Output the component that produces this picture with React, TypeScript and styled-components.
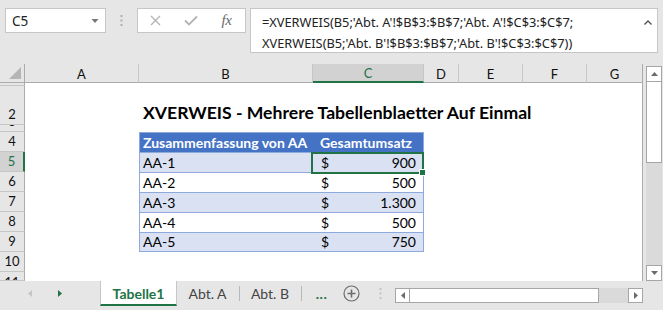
import React from "react";
import styled, { createGlobalStyle } from "styled-components";

const GREEN = "#217346";
const TABLE_LINE = "#8ea9db";

const GlobalStyle = createGlobalStyle`
  html, body {
    margin: 0;
    padding: 0;
    background: #e6e6e6;
  }
  * {
    box-sizing: border-box;
  }
`;

const Window = styled.div`
  width: 663px;
  height: 310px;
  overflow: hidden;
  background: #e6e6e6;
  display: flex;
  flex-direction: column;
  font-family: "Lato", "Open Sans", sans-serif;
`;

/* ---------- formula bar ---------- */

const FormulaRow = styled.div`
  height: 64px;
  flex: none;
  display: flex;
  align-items: flex-start;
  padding: 8px 0 0 5px;
`;

const NameBox = styled.div`
  width: 101px;
  height: 25px;
  background: #fff;
  border: 1px solid #c6c6c6;
  display: flex;
  align-items: center;
  justify-content: space-between;
  padding: 0 6px 0 6px;
  font-family: "Noto Sans", sans-serif;
  font-size: 13.5px;
  color: #222;
`;

const Grip = styled.div`
  width: 31px;
  height: 25px;
  display: flex;
  align-items: center;
  justify-content: center;
`;

const FxBox = styled.div`
  width: 109px;
  height: 25px;
  background: #fff;
  border: 1px solid #c6c6c6;
  display: flex;
  align-items: center;
  justify-content: space-around;
  padding: 0 2px 0 0;
`;

const FxLabel = styled.span`
  font-family: "Liberation Serif", serif;
  font-style: italic;
  font-size: 15px;
  color: #6b6b6b;
  letter-spacing: -0.5px;
`;

const FormulaBox = styled.div`
  margin-left: 4px;
  width: 408px;
  height: 45px;
  background: #fff;
  border: 1px solid #c6c6c6;
  display: flex;
  align-items: flex-start;
  justify-content: space-between;
  padding: 3px 4px 0 11px;
`;

const FormulaText = styled.div`
  font-family: "Noto Sans", sans-serif;
  font-size: 12.8px;
  line-height: 21px;
  color: #222;
  white-space: nowrap;
`;

/* ---------- sheet ---------- */

const SheetArea = styled.div`
  height: 217px;
  flex: none;
  display: flex;
`;

const Sheet = styled.div`
  width: 643px;
  display: grid;
  grid-template-columns: 25px 114px 174px 111px 35px 64px 64px 56px;
  grid-template-rows: 19px 3px 39px 7px repeat(7, 20px) 9px;
  background: #fff;
  border-right: 1px solid #ababab;
  overflow: hidden;
`;

const Corner = styled.div`
  grid-row: 1;
  grid-column: 1;
  background: #e6e6e6;
  border-right: 1px solid #ababab;
  border-bottom: 1px solid #ababab;
  display: flex;
  align-items: flex-end;
  justify-content: flex-end;
  padding: 0 3px 3px 0;
`;

const ColHeader = styled.div<{ $active?: boolean }>`
  grid-row: 1;
  background: ${(p) => (p.$active ? "#d2d2d2" : "#e6e6e6")};
  color: ${(p) => (p.$active ? GREEN : "#111")};
  border-right: 1px solid #c6c6c6;
  border-bottom: ${(p) => (p.$active ? `2px solid ${GREEN}` : "1px solid #ababab")};
  font-size: 13px;
  display: flex;
  align-items: center;
  justify-content: center;
  padding-top: 1px;
`;

const RowHeader = styled.div<{ $active?: boolean }>`
  grid-column: 1;
  background: ${(p) => (p.$active ? "#d2d2d2" : "#e6e6e6")};
  color: ${(p) => (p.$active ? GREEN : "#111")};
  border-right: ${(p) => (p.$active ? `2px solid ${GREEN}` : "1px solid #ababab")};
  border-bottom: 1px solid #c6c6c6;
  font-size: 13px;
  line-height: 16px;
  display: flex;
  align-items: flex-end;
  justify-content: center;
  padding-bottom: 2px;
  overflow: hidden;
`;

const RowHeaderTop = styled(RowHeader)`
  align-items: flex-start;
  padding: 2px 0 0;
`;

const Title = styled.div`
  grid-row: 3;
  grid-column: 3 / span 6;
  align-self: end;
  padding: 0 0 2px 4px;
  font-weight: 700;
  font-size: 17.6px;
  color: #000;
  white-space: nowrap;
`;

type Variant = "head" | "band" | "plain";

const Cell = styled.div<{ $variant: Variant; $col: "B" | "C"; $last?: boolean; $selected?: boolean }>`
  position: relative;
  grid-column: ${(p) => (p.$col === "B" ? 3 : 4)};
  background: ${(p) =>
    p.$variant === "head" ? "#4472c4" : p.$variant === "band" ? "#d9e1f2" : "#fff"};
  color: ${(p) => (p.$variant === "head" ? "#fff" : "#000")};
  font-weight: ${(p) => (p.$variant === "head" ? 700 : 400)};
  font-size: 14px;
  border-top: 1px solid ${TABLE_LINE};
  border-left: ${(p) => (p.$col === "B" ? `1px solid ${TABLE_LINE}` : "none")};
  border-right: ${(p) => (p.$col === "C" ? `1px solid ${TABLE_LINE}` : "none")};
  border-bottom: ${(p) => (p.$last ? `1px solid ${TABLE_LINE}` : "none")};
  display: flex;
  align-items: flex-end;
  justify-content: ${(p) =>
    p.$variant === "head" && p.$col === "C"
      ? "center"
      : p.$col === "C"
      ? "space-between"
      : "flex-start"};
  padding: 0 7px 1px ${(p) => (p.$col === "C" && p.$variant !== "head" ? "8px" : "3px")};
  line-height: 17px;
  white-space: nowrap;

  ${(p) =>
    p.$selected &&
    `
    &::before {
      content: "";
      position: absolute;
      left: -2px;
      top: -1px;
      right: -1px;
      bottom: -2px;
      border: 2px solid ${GREEN};
      z-index: 2;
    }
    &::after {
      content: "";
      position: absolute;
      right: -3px;
      bottom: -4px;
      width: 5px;
      height: 5px;
      background: ${GREEN};
      border: 1px solid #fff;
      z-index: 3;
    }
  `}
`;

/* ---------- vertical scrollbar ---------- */

const VScroll = styled.div`
  margin-left: 3px;
  width: 16px;
  padding-top: 2px;
  display: flex;
  flex-direction: column;
  background: #e6e6e6;
`;

const ScrollButton = styled.div`
  flex: none;
  width: 16px;
  height: 16px;
  background: #fff;
  border: 1px solid #a6a6a6;
  display: flex;
  align-items: center;
  justify-content: center;
`;

const VTrack = styled.div`
  flex: 1;
  background: #dadada;
  display: flex;
  flex-direction: column;
`;

const VThumb = styled.div`
  height: 81px;
  background: #fff;
  border: 1px solid #a6a6a6;
  border-top: none;
`;

/* ---------- tabs ---------- */

const TabBar = styled.div`
  flex: 1;
  display: flex;
  align-items: flex-start;
`;

const TabNav = styled.div`
  width: 100px;
  height: 25px;
  display: flex;
  align-items: center;
  padding-left: 27px;
  gap: 24px;
`;

const Tab = styled.div<{ $active?: boolean; $w: number }>`
  width: ${(p) => p.$w}px;
  height: 25px;
  display: flex;
  align-items: center;
  justify-content: center;
  font-size: 14px;
  background: ${(p) => (p.$active ? "#fff" : "transparent")};
  color: ${(p) => (p.$active ? GREEN : "#444")};
  font-weight: ${(p) => (p.$active ? 700 : 400)};
  border-bottom: ${(p) => (p.$active ? `2px solid ${GREEN}` : "2px solid transparent")};
  border-left: ${(p) => (p.$active ? "1px solid #c6c6c6" : "none")};
  border-right: ${(p) => (p.$active ? "1px solid #c6c6c6" : "1px solid transparent")};
  padding-top: 1px;
`;

const TabSep = styled.div`
  width: 1px;
  height: 15px;
  margin-top: 5px;
  background: #b8b8b8;
`;

const More = styled.div`
  width: 35px;
  height: 25px;
  display: flex;
  align-items: center;
  justify-content: center;
  color: ${GREEN};
  font-weight: 700;
  font-size: 14px;
  padding-left: 4px;
  letter-spacing: 0.5px;
`;

const AddSheet = styled.div`
  width: 28px;
  height: 25px;
  display: flex;
  align-items: center;
  justify-content: center;
`;

const TabGrip = styled.div`
  width: 30px;
  height: 25px;
  display: flex;
  align-items: center;
  justify-content: center;
`;

const HScroll = styled.div`
  margin-top: 7px;
  width: 248px;
  height: 15px;
  display: flex;
  background: #dadada;
`;

const HButton = styled.div`
  width: 15px;
  height: 15px;
  background: #fff;
  border: 1px solid #a6a6a6;
  display: flex;
  align-items: center;
  justify-content: center;
`;

const HThumb = styled.div`
  width: 189px;
  background: #fff;
  border: 1px solid #a6a6a6;
  border-left: none;
`;

const HTrack = styled.div`
  flex: 1;
`;

/* ---------- icons ---------- */

const Dots = ({ color = "#b0b0b0" }: { color?: string }) => (
  <svg width="3" height="11" viewBox="0 0 3 11">
    <rect x="0.5" y="0" width="2" height="2" fill={color} />
    <rect x="0.5" y="4.5" width="2" height="2" fill={color} />
    <rect x="0.5" y="9" width="2" height="2" fill={color} />
  </svg>
);

const Tri = ({ dir, color = "#6b6b6b", size = 7 }: { dir: "up" | "down" | "left" | "right"; color?: string; size?: number }) => {
  const pts = {
    up: "0,5 7,5 3.5,1",
    down: "0,1 7,1 3.5,5",
    left: "5,0 5,7 1,3.5",
    right: "1,0 1,7 5,3.5",
  }[dir];
  const vertical = dir === "up" || dir === "down";
  return (
    <svg width={vertical ? size : 6} height={vertical ? 6 : size} viewBox={vertical ? "0 0 7 6" : "0 0 6 7"}>
      <polygon points={pts} fill={color} />
    </svg>
  );
};

const rowHeaders = [1, 2, 3, 4, 5, 6, 7, 8, 9, 10];

const columns = ["A", "B", "C", "D", "E", "F", "G"];

const data = [
  ["AA-1", "900"],
  ["AA-2", "500"],
  ["AA-3", "1.300"],
  ["AA-4", "500"],
  ["AA-5", "750"],
];

export default function App() {
  return (
    <>
      <GlobalStyle />
      <Window>
        <FormulaRow>
          <NameBox>
            <span>C5</span>
            <Tri dir="down" color="#777" size={8} />
          </NameBox>
          <Grip>
            <Dots />
          </Grip>
          <FxBox>
            <svg width="11" height="11" viewBox="0 0 11 11">
              <path d="M1 1 L10 10 M10 1 L1 10" stroke="#b4b4b4" strokeWidth="1.4" />
            </svg>
            <svg width="14" height="11" viewBox="0 0 14 11">
              <path d="M1 5.5 L5 9.5 L13 1.5" stroke="#b4b4b4" strokeWidth="1.8" fill="none" />
            </svg>
            <FxLabel>fx</FxLabel>
          </FxBox>
          <FormulaBox>
            <FormulaText>
              =XVERWEIS(B5;'Abt. A'!$B$3:$B$7;'Abt. A'!$C$3:$C$7;
              <br />
              XVERWEIS(B5;'Abt. B'!$B$3:$B$7;'Abt. B'!$C$3:$C$7))
            </FormulaText>
            <svg width="10" height="10" viewBox="0 0 10 10" style={{ marginTop: 6 }}>
              <path d="M1.5 6.5 L5 3 L8.5 6.5" stroke="#555" strokeWidth="1.4" fill="none" />
            </svg>
          </FormulaBox>
        </FormulaRow>

        <SheetArea>
          <Sheet>
            <Corner>
              <svg width="12" height="12" viewBox="0 0 12 12">
                <polygon points="12,0 12,12 0,12" fill="#b5b5b5" />
              </svg>
            </Corner>
            {columns.map((c) => (
              <ColHeader key={c} $active={c === "C"}>
                {c}
              </ColHeader>
            ))}

            {rowHeaders.map((n) => (
              <RowHeader key={n} $active={n === 5} style={{ gridRow: n + 1 }}>
                {n}
              </RowHeader>
            ))}
            <RowHeaderTop style={{ gridRow: 12 }}>11</RowHeaderTop>

            <Title>XVERWEIS - Mehrere Tabellenblaetter Auf Einmal</Title>

            <Cell $variant="head" $col="B" style={{ gridRow: 5 }}>
              Zusammenfassung von AA
            </Cell>
            <Cell $variant="head" $col="C" style={{ gridRow: 5 }}>
              Gesamtumsatz
            </Cell>
            {data.map(([name, value], i) => {
              const variant: Variant = i % 2 === 0 ? "band" : "plain";
              const last = i === data.length - 1;
              return (
                <React.Fragment key={name}>
                  <Cell $variant={variant} $col="B" $last={last} style={{ gridRow: 6 + i }}>
                    {name}
                  </Cell>
                  <Cell $variant={variant} $col="C" $last={last} $selected={i === 0} style={{ gridRow: 6 + i }}>
                    <span>$</span>
                    <span>{value}</span>
                  </Cell>
                </React.Fragment>
              );
            })}
          </Sheet>

          <VScroll>
            <ScrollButton>
              <Tri dir="up" />
            </ScrollButton>
            <VTrack>
              <VThumb />
            </VTrack>
            <ScrollButton>
              <Tri dir="down" />
            </ScrollButton>
          </VScroll>
        </SheetArea>

        <TabBar>
          <TabNav>
            <Tri dir="left" color="#c4c4c4" />
            <Tri dir="right" color={GREEN} />
          </TabNav>
          <Tab $active $w={77}>
            Tabelle1
          </Tab>
          <Tab $w={62}>Abt. A</Tab>
          <TabSep />
          <Tab $w={61}>Abt. B</Tab>
          <TabSep />
          <More>...</More>
          <AddSheet>
            <svg width="17" height="17" viewBox="0 0 17 17">
              <circle cx="8.5" cy="8.5" r="7.5" stroke="#6d6d6d" strokeWidth="1.2" fill="none" />
              <path d="M8.5 4.5 V12.5 M4.5 8.5 H12.5" stroke="#6d6d6d" strokeWidth="1.6" />
            </svg>
          </AddSheet>
          <TabGrip>
            <Dots color="#c4c4c4" />
          </TabGrip>
          <HScroll>
            <HButton>
              <Tri dir="left" />
            </HButton>
            <HThumb />
            <HTrack />
            <HButton>
              <Tri dir="right" />
            </HButton>
          </HScroll>
        </TabBar>
      </Window>
    </>
  );
}
